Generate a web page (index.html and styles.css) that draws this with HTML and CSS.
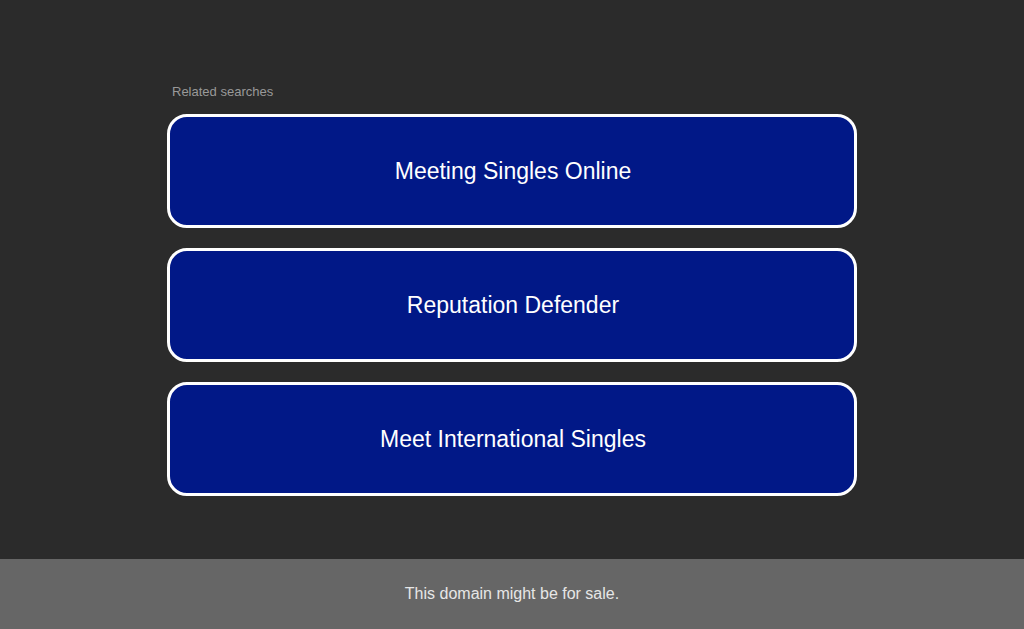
FILE: index.html
```html
<!DOCTYPE html>
<html>
<head>
<meta charset="utf-8">
<link rel="stylesheet" href="styles.css">
</head>
<body>
<div class="page">
  <main class="main">
    <div class="content">
      <div class="label">Related searches</div>
      <div class="links">
        <a class="link" href="#">Meeting Singles Online</a>
        <a class="link" href="#">Reputation Defender</a>
        <a class="link" href="#">Meet International Singles</a>
      </div>
    </div>
  </main>
  <footer class="footer">This domain might be for sale.</footer>
</div>
</body>
</html>
```
FILE: styles.css
```css
html, body {
  margin: 0;
  padding: 0;
  height: 100%;
}
body {
  background: #2b2b2b;
  font-family: "Liberation Sans", Arial, sans-serif;
}
.page {
  display: flex;
  flex-direction: column;
  height: 629px;
}
.main {
  flex: 1;
  display: flex;
  justify-content: center;
}
.content {
  width: 690px;
  padding-top: 84px;
}
.label {
  color: #999999;
  font-size: 13px;
  line-height: 16px;
  padding-left: 5px;
  margin-bottom: 14px;
}
.links {
  display: flex;
  flex-direction: column;
  gap: 20px;
}
.link {
  display: flex;
  align-items: center;
  justify-content: center;
  height: 108px;
  padding-left: 2px;
  border: 3px solid #ffffff;
  border-radius: 20px;
  background: #011887;
  color: #ffffff;
  font-size: 23px;
  text-decoration: none;
}
.footer {
  height: 70px;
  background: #666666;
  color: #e6e6e6;
  font-size: 16px;
  display: flex;
  align-items: center;
  justify-content: center;
}
```
